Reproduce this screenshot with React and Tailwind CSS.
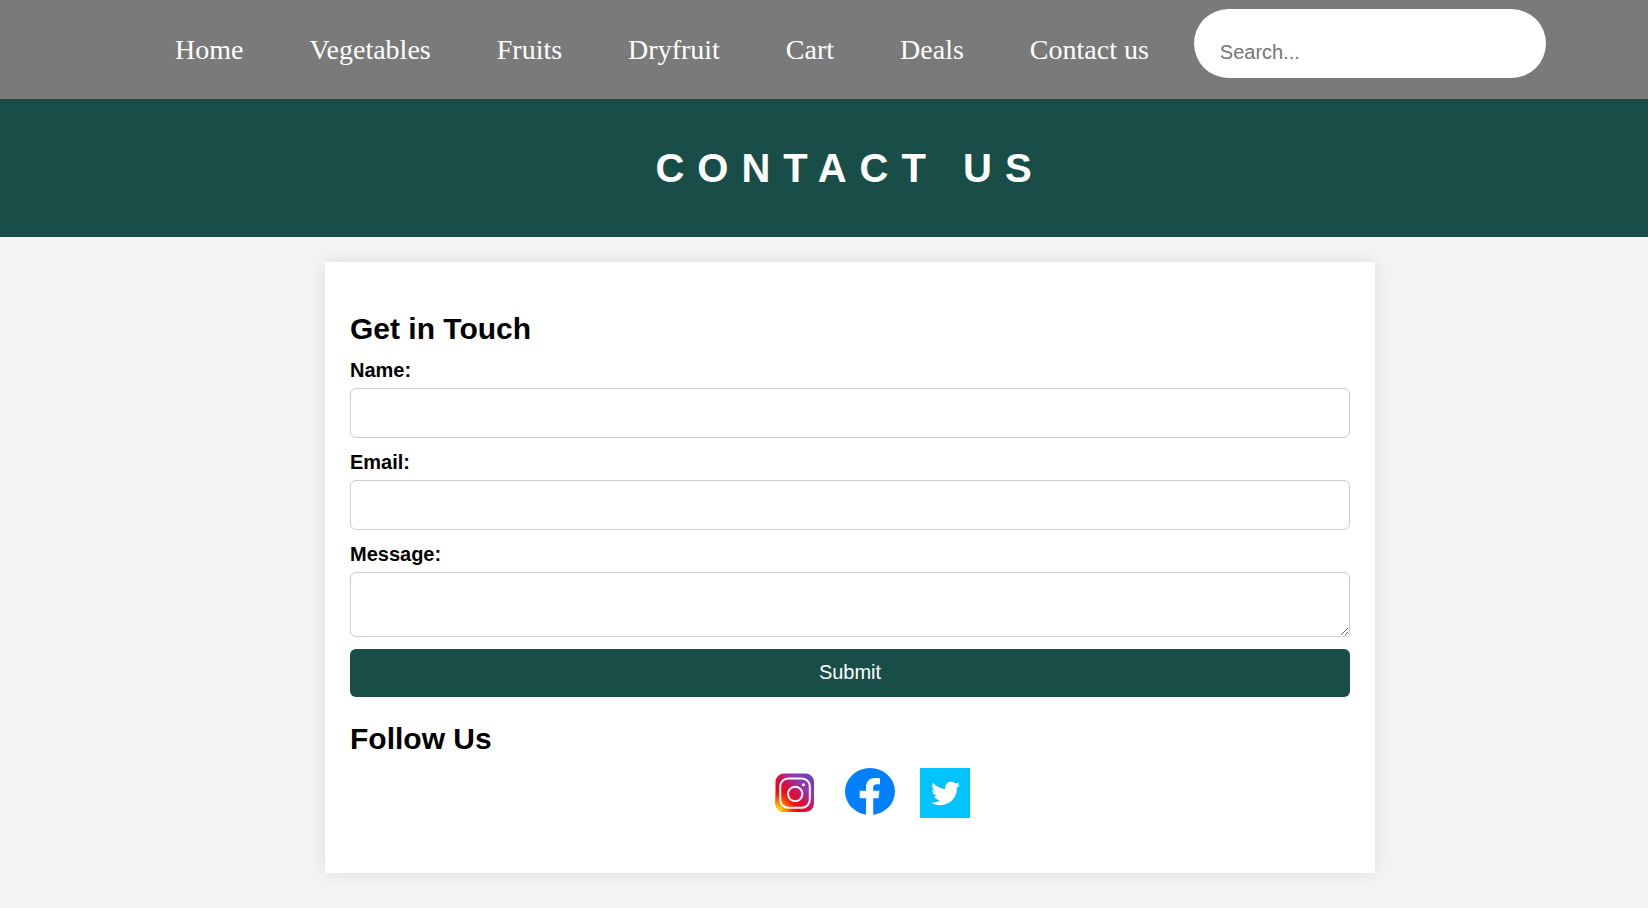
import React from "react";
import { FaTwitter } from "react-icons/fa";

const links = ["Home", "Vegetables", "Fruits", "Dryfruit", "Cart", "Deals", "Contact us"];

function InstagramIcon() {
  return (
    <svg viewBox="0 0 50 50" className="size-[50px]" aria-hidden="true">
      <defs>
        <linearGradient id="ig-base" x1="0.1" y1="0.85" x2="0.85" y2="0.1">
          <stop offset="0.2" stopColor="#fb0408" />
          <stop offset="0.5" stopColor="#d80f4a" />
          <stop offset="0.75" stopColor="#9038b0" />
          <stop offset="1" stopColor="#7340b4" />
        </linearGradient>
        <radialGradient id="ig-glow" cx="0.02" cy="1" r="0.6">
          <stop offset="0.15" stopColor="#ffe600" />
          <stop offset="0.5" stopColor="#ff9000" stopOpacity="0.8" />
          <stop offset="1" stopColor="#ff1000" stopOpacity="0" />
        </radialGradient>
      </defs>
      <rect x="5.5" y="5.5" width="38.5" height="38.5" rx="8.5" fill="url(#ig-base)" />
      <rect x="5.5" y="5.500" width="38.5" height="38.5" rx="8.5" fill="url(#ig-glow)" />
      <rect x="10.2" y="10.4" width="29.6" height="29.4" rx="8" fill="none" stroke="#fff" strokeWidth="2" />
      <circle cx="25.2" cy="26" r="7.200" fill="none" stroke="#fff" strokeWidth="2" />
      <circle cx="33.4" cy="16.7" r="1.5" fill="#fff" />
    </svg>
  );
}

function FacebookIcon() {
  return (
    <svg viewBox="0 0 50 50" className="size-[50px]" aria-hidden="true">
      <ellipse cx="25" cy="23.5" rx="25" ry="23.5" fill="#0080ff" />
      <path
        d="M21 47V30.2h-6.3v-7.4H21v-3.400c0-6.200 3.400-9.500 9.200-9.500 2 0 3.800.2 4.800.4v6h-3c-2.900 0-3.800 1.500-3.800 3.600v2.900h6.300l-1 7.400h-5.300V47z"
        fill="#fff"
      />
    </svg>
  );
}

function TwitterIcon() {
  return (
    <span className="flex size-[50px] items-center justify-center bg-[#00c3ff]">
      <FaTwitter className="size-[29px] text-white" aria-hidden="true" />
    </span>
  );
}

const fieldClass = "block w-full rounded-md border border-[#ccc] bg-white px-3 text-xl outline-none";

function Field({ id, label, children }) {
  return (
    <div className="flex flex-col gap-1.5">
      <label htmlFor={id} className="text-[20px] leading-6 font-bold">
        {label}
      </label>
      {children}
    </div>
  );
}

export default function App() {
  return (
    <div className="min-h-screen overflow-x-hidden bg-[#f4f4f4] font-['Liberation_Sans',Arial,sans-serif] text-black">
      <nav className="flex items-baseline bg-[#7a7a7a] pt-[9px] pb-[21px] pl-[175px]">
        <ul className="flex gap-[66px] font-['Liberation_Serif','Times_New_Roman',serif] text-[28px] leading-8 whitespace-nowrap text-white">
          {links.map((name) => (
            <li key={name}>
              <a href="#">{name}</a>
            </li>
          ))}
        </ul>
        <input
          type="search"
          aria-label="Search"
          placeholder="Search..."
          className="ml-[45px] w-[352px] appearance-none rounded-full bg-white pt-8 pr-6 pb-3.5 pl-[26px] text-[20px] leading-[23px] outline-none placeholder:text-[#757575]"
        />
      </nav>

      <header className="bg-[#194d47] py-[46px] pl-[52px] text-center text-white">
        <h1 className="text-[40px] leading-[46px] font-bold tracking-[13px] uppercase">Contact Us</h1>
      </header>

      <main className="py-[25px] pl-[52px]">
        <section className="mx-auto max-w-[1050px] bg-white px-[25px] pt-[50px] pb-[55px] shadow-[0_0_18px_rgba(0,0,0,0.1)]">
          <h2 className="text-[30px] leading-[34px] font-bold">Get in Touch</h2>
          <form className="mt-3 flex flex-col gap-3" onSubmit={(e) => e.preventDefault()}>
            <Field id="name" label="Name:">
              <input id="name" type="text" className={fieldClass + " h-[50px]"} />
            </Field>
            <Field id="email" label="Email:">
              <input id="email" type="email" className={fieldClass + " h-[50px]"} />
            </Field>
            <Field id="message" label="Message:">
              <textarea id="message" className={fieldClass + " h-[65px] resize py-3"} />
            </Field>
            <button type="submit" className="h-12 w-full rounded-md bg-[#194d47] pb-0.5 text-[20px] text-white">
              Submit
            </button>
          </form>
          <h2 className="mt-[25px] text-[30px] leading-[34px] font-bold">Follow Us</h2>
          <div className="mt-3 flex justify-center gap-[25px] pl-10">
            <a href="#" aria-label="Instagram">
              <InstagramIcon />
            </a>
            <a href="#" aria-label="Facebook">
              <FacebookIcon />
            </a>
            <a href="#" aria-label="Twitter">
              <TwitterIcon />
            </a>
          </div>
        </section>
      </main>
    </div>
  );
}
